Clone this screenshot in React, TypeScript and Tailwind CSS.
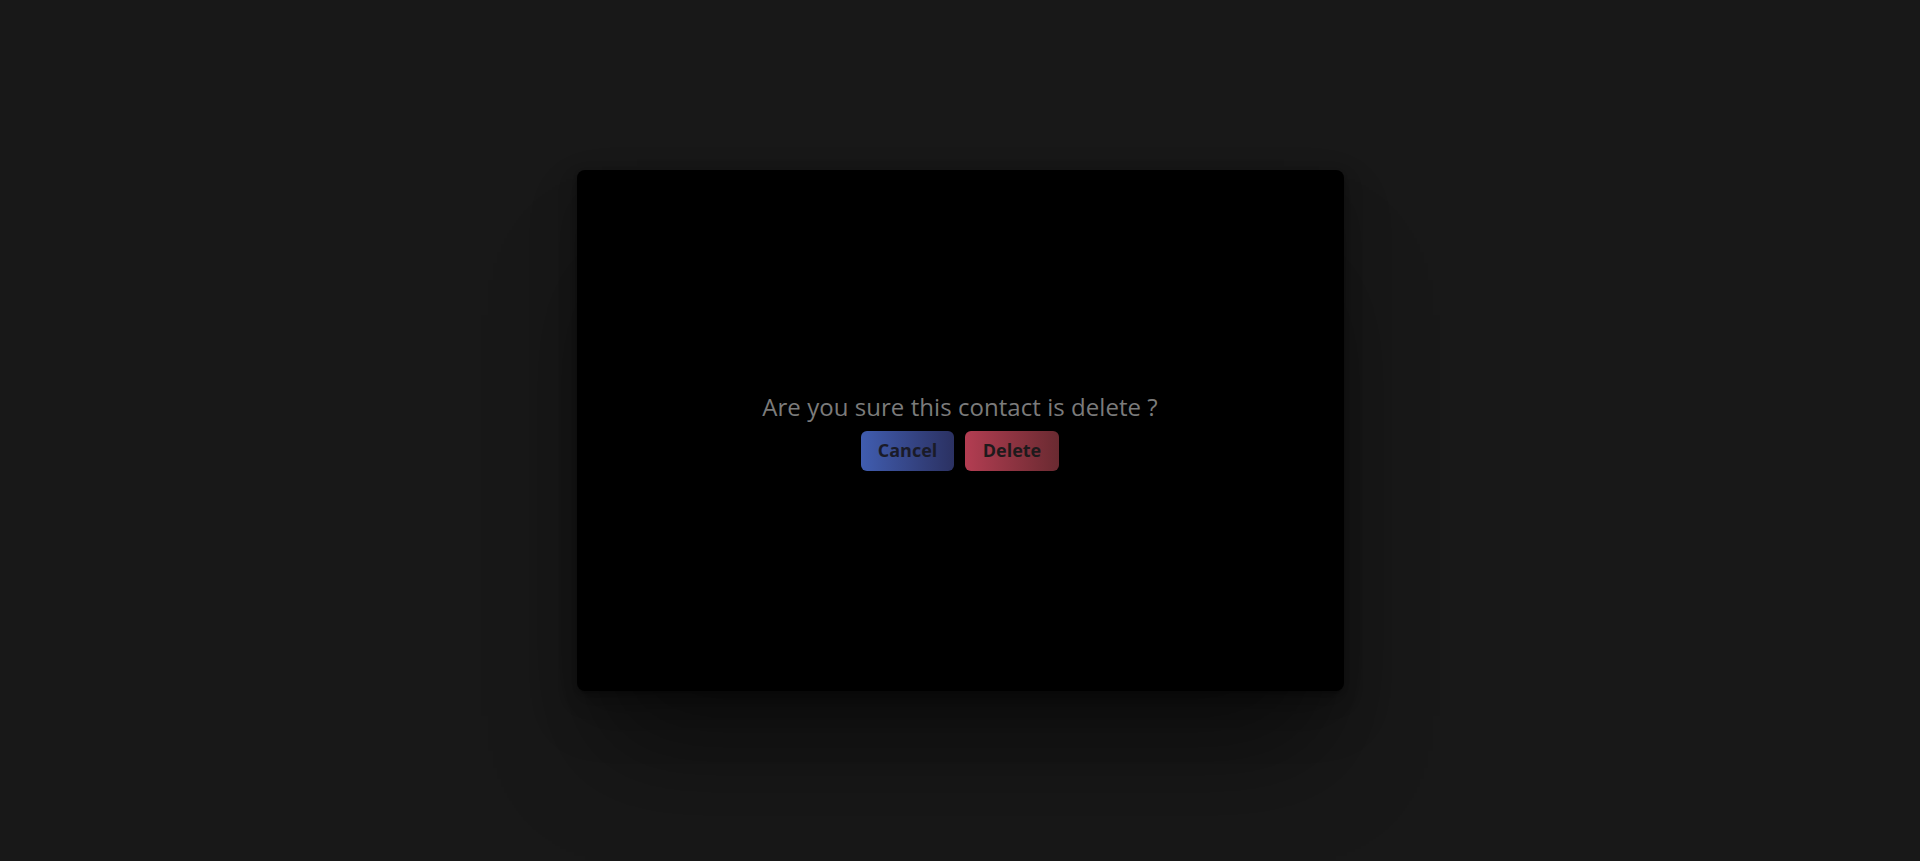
import React from "react";

export default function App() {
  return (
    <div
      className="w-full h-[861px] bg-[#181818] flex items-center justify-center"
      style={{ fontFamily: '"Open Sans", "Noto Sans", sans-serif' }}
    >
      <div className="w-[767px] h-[521px] bg-black rounded-lg flex flex-col items-center justify-center shadow-[0_2px_4px_rgba(0,0,0,0.25),0_10px_20px_rgba(0,0,0,0.2),0_25px_50px_rgba(0,0,0,0.2),0_85px_100px_-25px_rgba(0,0,0,0.4)]">
        <p className="text-[24px] leading-[32px] text-[#7b7b7b] tracking-[0.05px]">
          Are you sure this contact is delete ?
        </p>
        <div className="mt-[8px] flex gap-[11px]">
          <button className="h-10 w-[93px] rounded-md bg-gradient-to-r from-[#405db0] to-[#2b3162] text-[18px] font-bold text-[#1a1b28] shadow-[0_3px_8px_rgba(0,0,0,0.6)]">
            Cancel
          </button>
          <button className="h-10 w-[94px] rounded-md bg-gradient-to-r from-[#b33d52] to-[#6a2a31] text-[18px] font-bold text-[#1e1a1c] shadow-[0_3px_8px_rgba(0,0,0,0.6)]">
            Delete
          </button>
        </div>
      </div>
    </div>
  );
}
